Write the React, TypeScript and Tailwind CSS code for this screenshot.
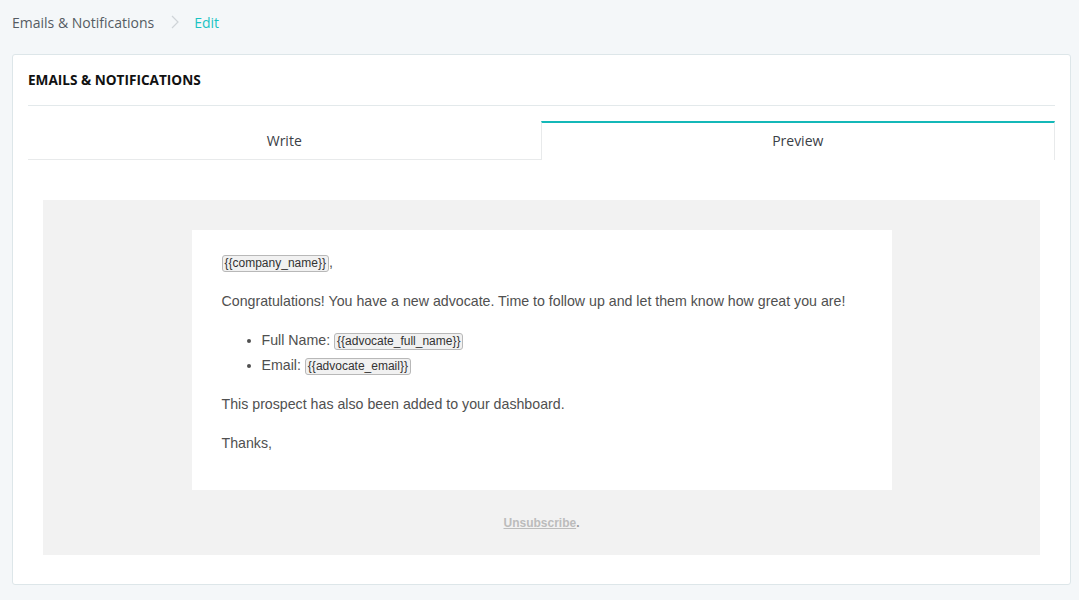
function Tag({ children }: { children: string }) {
  return (
    <span className="inline-block rounded-[3px] border border-[#b8b8b8] bg-[#f1f1f1] px-[2px] text-[12px] leading-[15px] text-[#333]">
      {children}
    </span>
  );
}

export default function App() {
  return (
    <div className="min-h-screen bg-[#f4f7f9] pl-3 pr-2 font-['Open_Sans',sans-serif]">
      {/* Breadcrumb */}
      <div className="flex h-[44px] items-center text-[14px]">
        <span className="text-[#555c63]">Emails &amp; Notifications</span>
        <svg className="ml-[16px] mr-[14px] h-[14px] w-[10px]" viewBox="0 0 10 14" fill="none">
          <path d="M2 1l6 6-6 6" stroke="#cfd4d8" strokeWidth="1.2" />
        </svg>
        <span className="text-[#19c3c3]">Edit</span>
      </div>

      {/* Card */}
      <div className="mt-[10px] rounded-[3px] border border-[#dde6e9] bg-white px-[15px] pb-[29px]">
        <div className="flex h-[51px] items-center border-b border-[#e3e9eb] pt-[1px]">
          <h1 className="text-[13.6px] font-bold text-[#111]">EMAILS &amp; NOTIFICATIONS</h1>
        </div>

        {/* Tabs */}
        <div className="mt-[15px] flex h-[39px] text-[14px] text-[#3a4046]">
          <div className="flex flex-1 items-center justify-center border-b border-[#e8eaeb]">Write</div>
          <div className="flex flex-1 items-center justify-center border-x border-t-2 border-x-[#e8eaeb] border-t-[#14b8b8] pb-[2px]">
            Preview
          </div>
        </div>

        {/* Email preview */}
        <div className="mt-[40px] px-[15px]">
          <div className="bg-[#f2f2f2] pt-[30px] font-['Liberation_Sans',Arial,sans-serif]">
            <div className="mx-auto flex w-[700px] flex-col gap-[14px] bg-white px-[30px] pb-[34px] pt-[20px] text-[14.2px] leading-[25px] text-[#505050]">
              <p>
                <Tag>{"{{company_name}}"}</Tag>,
              </p>
              <p>Congratulations! You have a new advocate. Time to follow up and let them know how great you are!</p>
              <ul className="list-disc pl-[40px]">
                <li>
                  Full Name: <Tag>{"{{advocate_full_name}}"}</Tag>
                </li>
                <li>
                  Email: <Tag>{"{{advocate_email}}"}</Tag>
                </li>
              </ul>
              <p>This prospect has also been added to your dashboard.</p>
              <p>Thanks,</p>
            </div>
            <div className="flex h-[65px] items-center justify-center text-[12px] font-bold text-[#bcbcbc]">
              <span className="underline">Unsubscribe</span>
              <span className="text-[#9a9a9a]">.</span>
            </div>
          </div>
        </div>
      </div>
    </div>
  );
}
